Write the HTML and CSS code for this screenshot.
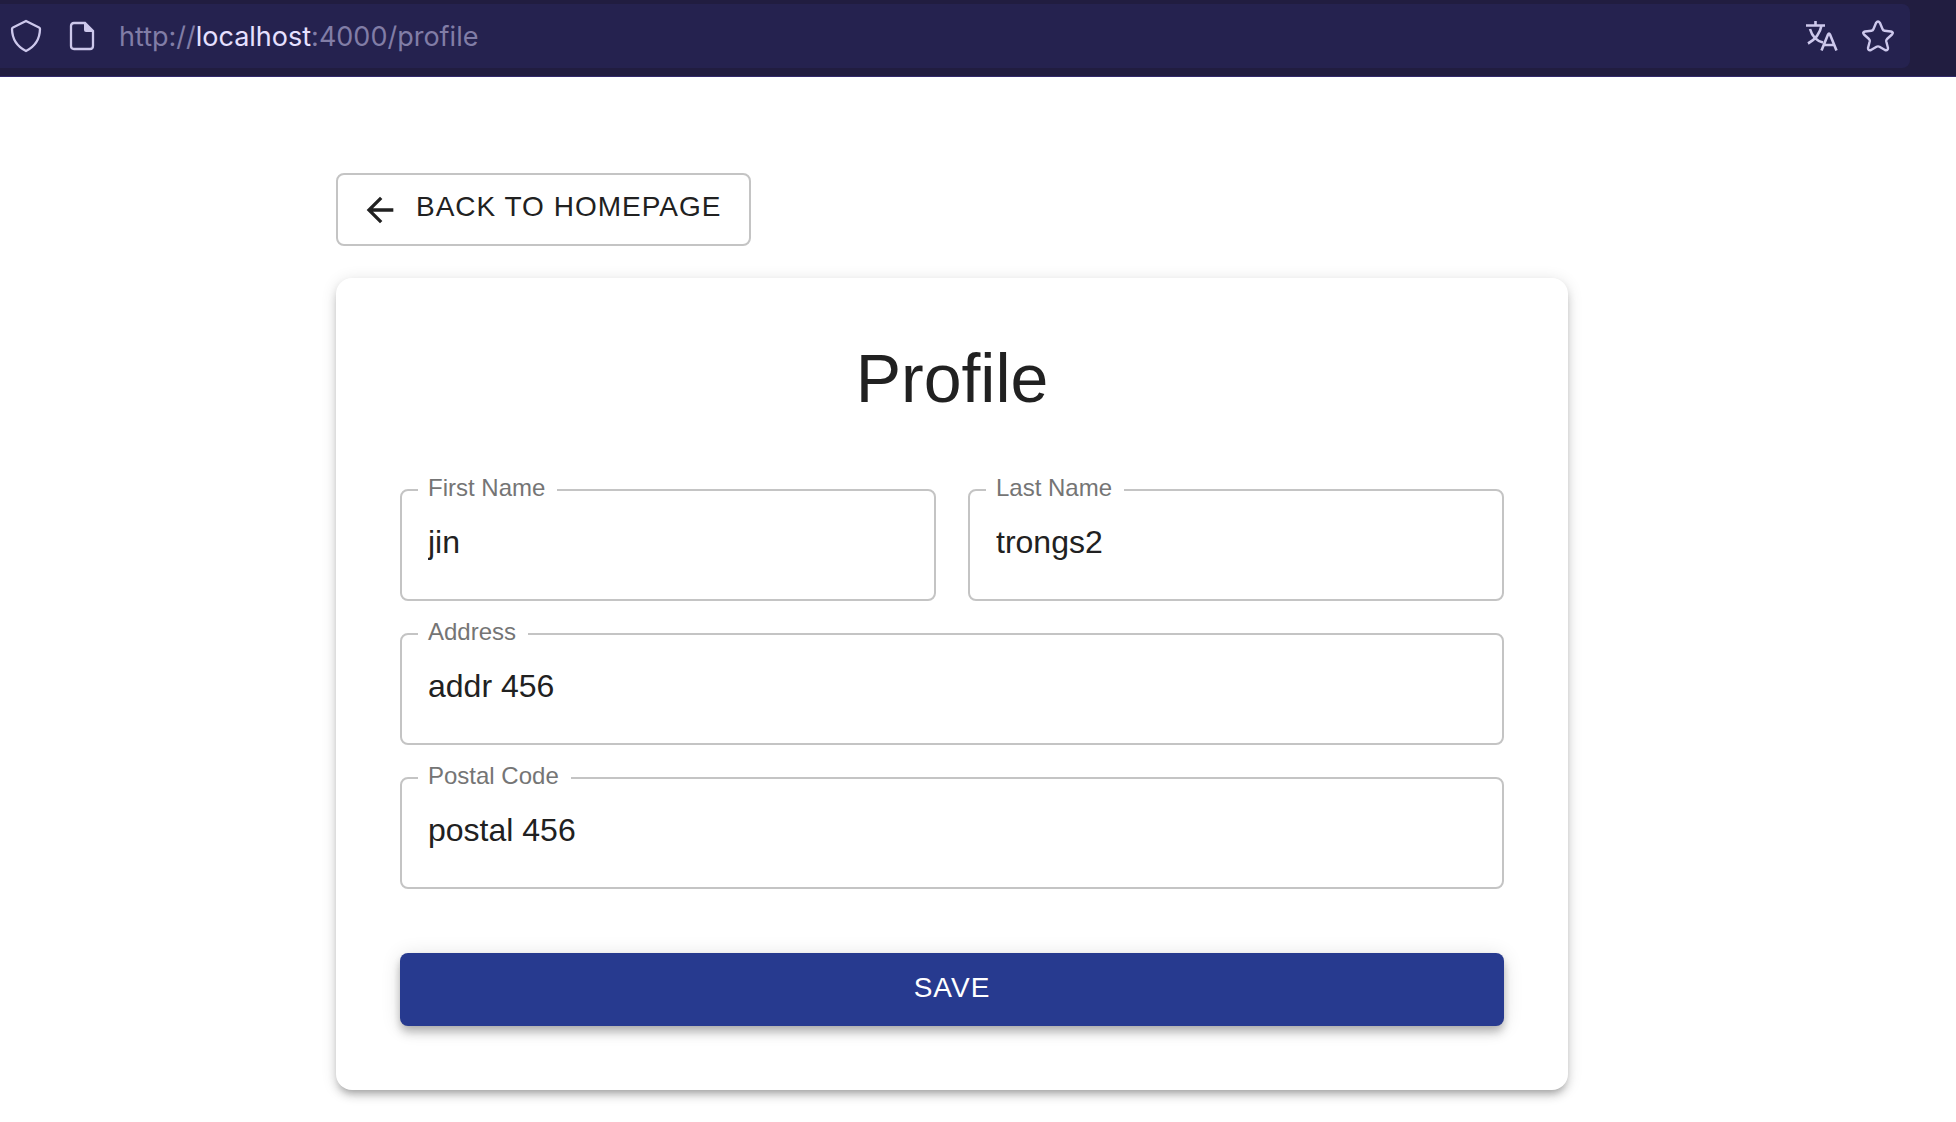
FILE: index.html
```html
<!DOCTYPE html>
<html lang="en">
<head>
  <meta charset="utf-8">
  <meta name="viewport" content="width=device-width, initial-scale=1">
  <title>Profile</title>
  <link rel="stylesheet" href="styles.css">
</head>
<body>
  <header class="toolbar">
    <div class="address-bar">
      <button class="icon-button" type="button" aria-label="Tracking protection">
        <svg width="32" height="34" viewBox="0 0 32 34" fill="none" stroke="currentColor" stroke-width="2.300" stroke-linejoin="round"><path d="M16 2L29 8.500Q30 9 30 10C29.800 19 26 27 16 32C6 27 2.200 19 2 10Q2 9 3 8.500Z"/></svg>
      </button>
      <button class="icon-button" type="button" aria-label="Site information">
        <svg width="26" height="30" viewBox="0 0 26 30" fill="none" stroke="currentColor" stroke-width="2.300"><path d="M5 2H16L24 10V25Q24 28 21 28H5Q2 28 2 25V5Q2 2 5 2Z"/><path d="M15 2V9Q15 11 17 11H24V10L16 2Z" fill="currentColor" stroke="none"/></svg>
      </button>
      <div class="url">http://<span class="host">localhost</span>:4000/profile</div>
      <button class="icon-button" type="button" aria-label="Translate page">
        <svg width="32" height="32" viewBox="0 0 32 32" fill="none" stroke="currentColor" stroke-width="2.600"><path d="M0 5.500H19M9.500 1V5.500M4 9C6 16 11 21 17 22.500M15.500 5.500C14 14 10 19 2 23.500M15.500 30.500L22 14.500Q23 12.500 24 14.500L30.500 30.500M18 25H28"/></svg>
      </button>
      <button class="icon-button" type="button" aria-label="Bookmark this page">
        <svg width="32" height="32" viewBox="0 0 32 32" fill="none" stroke="currentColor" stroke-width="2.400" stroke-linejoin="round"><path d="M14 3Q16 0 18 3L20.500 9Q21 10.500 22.500 10.700L29 11.500Q32 12.300 30 14.500L25 19Q24 20 24.300 21.500L26 28Q26 31 23 30L17.500 26.800Q16 26 14.500 26.800L9 30Q6 31 6 28L7.700 21.500Q8 20 7 19L2 14.500Q0 12.300 3 11.500L9.500 10.700Q11 10.500 11.500 9Z"/></svg>
      </button>
    </div>
  </header>
  <main class="page">
    <div class="container">
      <button class="button button-outlined" type="button">
        <svg width="40" height="40" viewBox="0 0 24 24" fill="currentColor" aria-hidden="true"><path d="M20 11H7.830l5.590-5.590L12 4l-8 8 8 8 1.410-1.410L7.830 13H20v-2z"/></svg>
        <span>BACK TO HOMEPAGE</span>
      </button>
      <section class="card">
        <h1 class="title">Profile</h1>
        <form class="form">
          <div class="field">
            <label for="first-name">First Name</label>
            <input id="first-name" type="text" value="jin">
          </div>
          <div class="field">
            <label for="last-name">Last Name</label>
            <input id="last-name" type="text" value="trongs2">
          </div>
          <div class="field field-wide">
            <label for="address">Address</label>
            <input id="address" type="text" value="addr 456">
          </div>
          <div class="field field-wide">
            <label for="postal-code">Postal Code</label>
            <input id="postal-code" type="text" value="postal 456">
          </div>
          <button class="button button-primary" type="submit">SAVE</button>
        </form>
      </section>
    </div>
  </main>
</body>
</html>
```
FILE: styles.css
```css
* {
  box-sizing: border-box;
}

body {
  margin: 0;
  background: #fff;
  color: #212121;
  font-family: "Liberation Sans", Arial, sans-serif;
}

button,
input {
  font: inherit;
  color: inherit;
}

.toolbar {
  padding: 4px 46px 8px 0;
  background: #211d40;
  border-bottom: 1px solid #32296b;
}

.address-bar {
  display: flex;
  align-items: center;
  height: 64px;
  padding: 0 16px 0 10px;
  border-radius: 0 8px 8px 0;
  background: #25224f;
  color: #cdc8ec;
}

.icon-button {
  display: flex;
  padding: 0;
  border: 0;
  background: none;
  cursor: pointer;
}

.icon-button + .icon-button {
  margin-left: 27px;
}

.url {
  flex: 1;
  margin-left: 24px;
  padding-top: 2px;
  color: #817da6;
  font-family: Inter, sans-serif;
  font-size: 27px;
  line-height: 32px;
}

.url + .icon-button + .icon-button {
  margin-left: 24px;
}

.host {
  color: #e6e0ff;
}

.page {
  padding: 96px 52px 31px 0;
}

.container {
  max-width: 1232px;
  margin: 0 auto;
}

.button {
  display: flex;
  align-items: center;
  justify-content: center;
  min-height: 73px;
  border: 0;
  border-radius: 8px;
  font-size: 28px;
  line-height: 48px;
  letter-spacing: 1px;
  cursor: pointer;
}

.button-outlined {
  gap: 16px;
  padding: 6px 28px 6px 22px;
  border: 2px solid #c4c4c4;
  background: #fff;
}

.button-outlined span {
  padding-bottom: 5px;
}

.card {
  margin-top: 32px;
  padding: 64px;
  border-radius: 16px;
  background: #fff;
  box-shadow:
    0 6px 6px -4px rgba(0, 0, 0, 0.2),
    0 6px 8px 0 rgba(0, 0, 0, 0.14),
    0 2px 16px 0 rgba(0, 0, 0, 0.12);
}

.title {
  margin: 0 0 75px;
  font-size: 68px;
  font-weight: 400;
  line-height: 72px;
  text-align: center;
}

.form {
  display: grid;
  grid-template-columns: 1fr 1fr;
  gap: 32px;
}

.field {
  position: relative;
}

.field-wide,
.button-primary {
  grid-column: 1 / -1;
}

.field label {
  position: absolute;
  top: -15px;
  left: 18px;
  padding: 0 12px 0 10px;
  background: #fff;
  color: #757575;
  font-size: 24px;
  line-height: 28px;
}

.field input {
  display: block;
  width: 100%;
  height: 112px;
  padding: 0 26px 6px;
  border: 2px solid #c4c4c4;
  border-radius: 8px;
  background: none;
  font-size: 32px;
}

.button-primary {
  margin-top: 32px;
  padding: 8px 32px 12px;
  background: #273a8f;
  color: #fff;
  box-shadow:
    0 4px 8px -2px rgba(0, 0, 0, 0.2),
    0 8px 10px 0 rgba(0, 0, 0, 0.14),
    0 2px 20px 0 rgba(0, 0, 0, 0.12);
}
```
